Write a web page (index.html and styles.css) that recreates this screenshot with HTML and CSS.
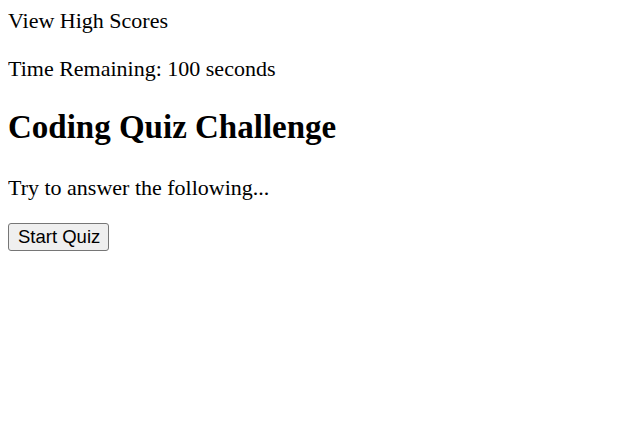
FILE: index.html
```html
<!DOCTYPE html>
<html>
<head>
<meta charset="utf-8">
<title>Coding Quiz</title>
<link rel="stylesheet" href="styles.css">
</head>
<body>
<header class="top">
  <div class="scores">View High Scores</div>
  <p class="timer">Time Remaining: <span>100</span> seconds</p>
</header>
<main class="intro">
  <h1 class="title">Coding Quiz Challenge</h1>
  <p class="lead">Try to answer the following...</p>
  <button class="start">Start Quiz</button>
</main>
</body>
</html>
```
FILE: styles.css
```css
body {
  margin: 8px;
  font-family: "Liberation Serif", "Times New Roman", serif;
  font-size: 22px;
  color: #000;
  background: #fff;
}
.scores { margin: 0; }
.timer { margin: 22px 0; }
.title { font-size: 33px; font-weight: bold; margin: 27px 0 29px; }
.lead { margin: 22px 0; }
.start {
  font-family: "Liberation Sans", Arial, sans-serif;
  font-size: 18.5px;
  padding: 2px 8px 2px 9px;
  background: #efefef;
  border: 1px solid #767676;
  border-radius: 3px;
  color: #000;
}
```
